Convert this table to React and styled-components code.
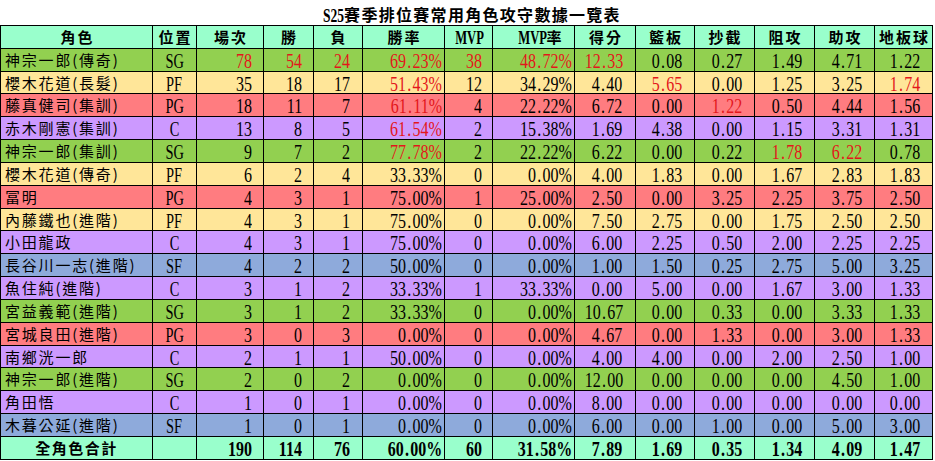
import React from "react";
import styled, { createGlobalStyle } from "styled-components";

const GlobalStyle = createGlobalStyle`
  html, body { margin: 0; padding: 0; background: #ffffff; }
  body { font-family: "Noto Sans CJK TC", "Noto Sans", sans-serif; color: #000; }
`;

const ROW_BG = {
  SG: "#92d050",
  PF: "#ffe699",
  PG: "#ff7c80",
  C: "#cc99ff",
  SF: "#8eaadb",
};

const COLS = [
  { w: 152 },
  { w: 44 },
  { w: 67, pad: 11 },
  { w: 50, pad: 11 },
  { w: 49, pad: 12 },
  { w: 82, pad: 2 },
  { w: 48, pad: 10 },
  { w: 82, pad: 2 },
  { w: 61, pad: 13 },
  { w: 59, pad: 12 },
  { w: 60, pad: 12 },
  { w: 60, pad: 12 },
  { w: 60, pad: 12 },
  { w: 58, pad: 12 },
];

const HEADERS = ["角色", "位置", "場次", "勝", "負", "勝率", "MVP", "MVP率", "得分", "籃板", "抄截", "阻攻", "助攻", "地板球"];

const ROWS = [
  { d: ["神宗一郎(傳奇)", "SG", "78", "54", "24", "69.23%", "38", "48.72%", "12.33", "0.08", "0.27", "1.49", "4.71", "1.22"], hi: [2, 3, 4, 5, 6, 7, 8] },
  { d: ["櫻木花道(長髮)", "PF", "35", "18", "17", "51.43%", "12", "34.29%", "4.40", "5.65", "0.00", "1.25", "3.25", "1.74"], hi: [5, 9, 13] },
  { d: ["藤真健司(集訓)", "PG", "18", "11", "7", "61.11%", "4", "22.22%", "6.72", "0.00", "1.22", "0.50", "4.44", "1.56"], hi: [5, 10] },
  { d: ["赤木剛憲(集訓)", "C", "13", "8", "5", "61.54%", "2", "15.38%", "1.69", "4.38", "0.00", "1.15", "3.31", "1.31"], hi: [5] },
  { d: ["神宗一郎(集訓)", "SG", "9", "7", "2", "77.78%", "2", "22.22%", "6.22", "0.00", "0.22", "1.78", "6.22", "0.78"], hi: [5, 11, 12] },
  { d: ["櫻木花道(傳奇)", "PF", "6", "2", "4", "33.33%", "0", "0.00%", "4.00", "1.83", "0.00", "1.67", "2.83", "1.83"], hi: [] },
  { d: ["冨明", "PG", "4", "3", "1", "75.00%", "1", "25.00%", "2.50", "0.00", "3.25", "2.25", "3.75", "2.50"], hi: [] },
  { d: ["內藤鐵也(進階)", "PF", "4", "3", "1", "75.00%", "0", "0.00%", "7.50", "2.75", "0.00", "1.75", "2.50", "2.50"], hi: [] },
  { d: ["小田龍政", "C", "4", "3", "1", "75.00%", "0", "0.00%", "6.00", "2.25", "0.50", "2.00", "2.25", "2.25"], hi: [] },
  { d: ["長谷川一志(進階)", "SF", "4", "2", "2", "50.00%", "0", "0.00%", "1.00", "1.50", "0.25", "2.75", "5.00", "3.25"], hi: [] },
  { d: ["魚住純(進階)", "C", "3", "1", "2", "33.33%", "1", "33.33%", "0.00", "5.00", "0.00", "1.67", "3.00", "1.33"], hi: [] },
  { d: ["宮益義範(進階)", "SG", "3", "1", "2", "33.33%", "0", "0.00%", "10.67", "0.00", "0.33", "0.00", "3.33", "1.33"], hi: [] },
  { d: ["宮城良田(進階)", "PG", "3", "0", "3", "0.00%", "0", "0.00%", "4.67", "0.00", "1.33", "0.00", "3.00", "1.33"], hi: [] },
  { d: ["南鄉洸一郎", "C", "2", "1", "1", "50.00%", "0", "0.00%", "4.00", "4.00", "0.00", "2.00", "2.50", "1.00"], hi: [] },
  { d: ["神宗一郎(進階)", "SG", "2", "0", "2", "0.00%", "0", "0.00%", "12.00", "0.00", "0.00", "0.00", "4.50", "1.00"], hi: [] },
  { d: ["角田悟", "C", "1", "0", "1", "0.00%", "0", "0.00%", "8.00", "0.00", "0.00", "0.00", "0.00", "0.00"], hi: [] },
  { d: ["木暮公延(進階)", "SF", "1", "0", "1", "0.00%", "0", "0.00%", "6.00", "0.00", "1.00", "0.00", "5.00", "3.00"], hi: [] },
];

const TOTAL = ["全角色合計", "", "190", "114", "76", "60.00%", "60", "31.58%", "7.89", "1.69", "0.35", "1.34", "4.09", "1.47"];

const Page = styled.div`
  width: 935px;
`;

const Title = styled.div`
  height: 25px;
  box-sizing: border-box;
  display: flex;
  align-items: flex-end;
  justify-content: center;
  padding-bottom: 2px;
  padding-left: 2px;
  font-family: "Noto Sans CJK TC", sans-serif;
  font-weight: 700;
  font-size: 16px;
  line-height: 17px;
  letter-spacing: 1.3px;
  white-space: nowrap;
  overflow: hidden;
`;

const Sheet = styled.table`
  border-collapse: collapse;
  table-layout: fixed;
  width: 933px;
`;

const Col = styled.col`
  width: ${(p) => p.$w}px;
`;

const Row = styled.tr`
  height: 22.84px;
  background: ${(p) => p.$bg};
`;

const Cell = styled.td`
  border: 1px solid #000;
  padding: 0;
  height: 20px;
  line-height: 16px;
  vertical-align: middle;
  white-space: nowrap;
  overflow: visible;
  color: ${(p) => (p.$hot ? "#e3161b" : "#000")};
`;

const HeadCell = styled(Cell).attrs({ as: "th" })`
  font-weight: 700;
  font-size: 15px;
  letter-spacing: 2px;
  text-align: center;
  padding-left: 2px;
`;

const NameCell = styled(Cell)`
  text-align: ${(p) => (p.$center ? "center" : "left")};
  padding-left: ${(p) => (p.$center ? "0" : "4px")};
  font-size: 15px;
  font-weight: ${(p) => (p.$bold ? 700 : 400)};
  letter-spacing: ${(p) => (p.$center ? "1.5px" : "1.8px")};
`;

const PosCell = styled(Cell)`
  text-align: center;
`;

const NumCell = styled(Cell)`
  text-align: right;
  padding-right: ${(p) => p.$pad}px;
`;

const Glyphs = styled.span`
  display: inline-block;
  font-family: "Liberation Serif", "Times New Roman", serif;
  font-size: ${(p) => p.$size || 20}px;
  line-height: 16px;
  height: 16px;
  font-weight: ${(p) => (p.$bold ? 700 : 400)};
  letter-spacing: 0;
  transform: scaleX(${(p) => p.$sx || 0.8});
  transform-origin: ${(p) => p.$origin || "right"} center;
  vertical-align: top;
  position: relative;
  top: 1px;
`;

const Dot = styled.span`
  padding: 0 1.6px;
`;

const Num = ({ v, bold, origin, sx, size }) => {
  const i = v.indexOf(".");
  return (
    <Glyphs $bold={bold} $origin={origin} $sx={sx} $size={size}>
      {i < 0 ? (
        v
      ) : (
        <>
          {v.slice(0, i)}
          <Dot>.</Dot>
          {v.slice(i + 1)}
        </>
      )}
    </Glyphs>
  );
};

const Header = ({ label }) => {
  if (label.startsWith("MVP")) {
    const rest = label.slice(3);
    return (
      <HeadCell>
        <Num v="MVP" bold origin={rest ? "right" : "center"} sx={0.7} size={18} />
        {rest}
      </HeadCell>
    );
  }
  return <HeadCell>{label}</HeadCell>;
};

const DataRow = ({ cells, hi = [], bg, total }) => (
  <Row $bg={bg}>
    <NameCell $center={total} $bold={total}>{cells[0]}</NameCell>
    <PosCell>{cells[1] && <Num v={cells[1]} origin="center" sx={0.72} />}</PosCell>
    {cells.slice(2).map((v, k) => (
      <NumCell key={k} $pad={COLS[k + 2].pad} $hot={hi.includes(k + 2)}>
        <Num v={v} bold={total} />
      </NumCell>
    ))}
  </Row>
);

export default function App() {
  return (
    <Page>
      <GlobalStyle />
      <Title>
        <Num v="S25" bold origin="right" sx={0.75} size={18} />賽季排位賽常用角色攻守數據一覽表
      </Title>
      <Sheet>
        <colgroup>
          {COLS.map((c, k) => (
            <Col key={k} $w={c.w} />
          ))}
        </colgroup>
        <thead>
          <Row $bg="#99ffcc">
            {HEADERS.map((h) => (
              <Header key={h} label={h} />
            ))}
          </Row>
        </thead>
        <tbody>
          {ROWS.map((r, k) => (
            <DataRow key={k} cells={r.d} hi={r.hi} bg={ROW_BG[r.d[1]]} />
          ))}
          <DataRow cells={TOTAL} bg="#99ffcc" total />
        </tbody>
      </Sheet>
    </Page>
  );
}
